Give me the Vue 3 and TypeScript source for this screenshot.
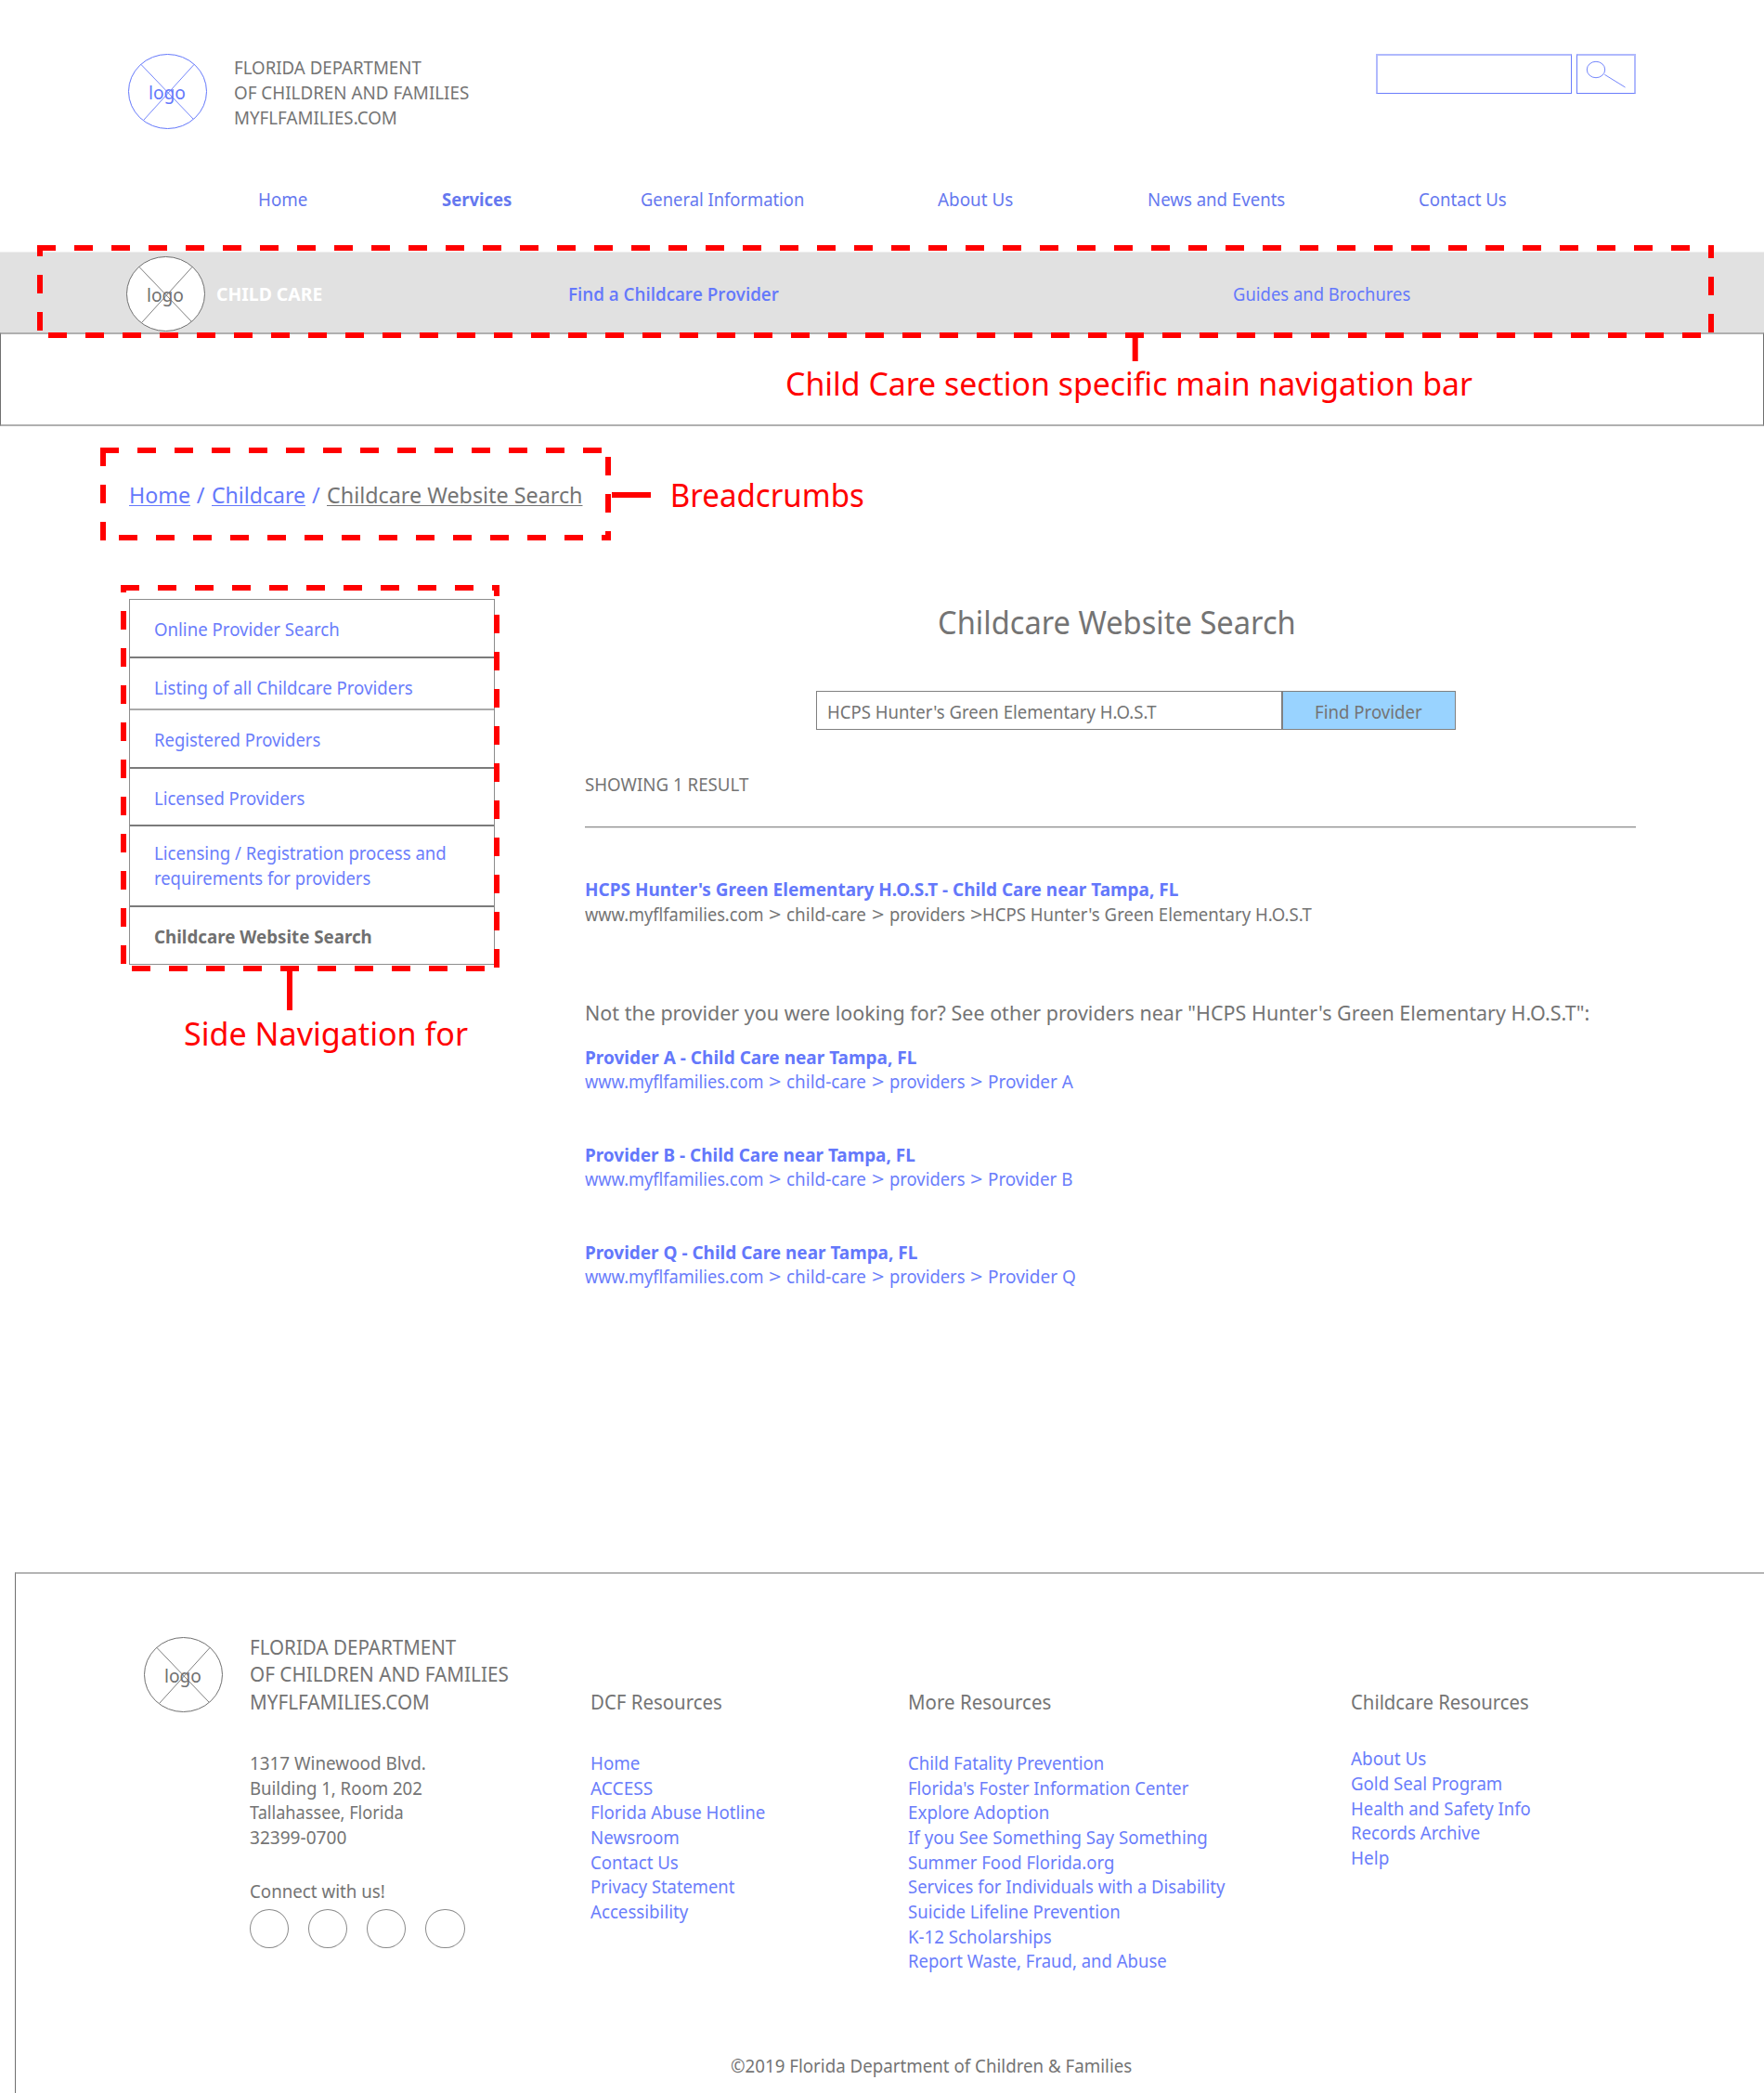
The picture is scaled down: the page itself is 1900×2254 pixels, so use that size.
<script setup lang="ts">
import { h, type Directive, type FunctionalComponent } from 'vue'

interface Line { text: string; width: number }
interface NavLine extends Line { bold?: boolean }
interface Segment extends Line { tight?: boolean }
interface Result { title: Line; page: Segment }
interface Dash { x1: number; y1: number; x2: number; y2: number; offset: number }

const BLUE = '#6478fb'
const GRAY = '#707070'

// Space kept free after the last letter of a fitted line.
const TRAILING = 1.2

// Condenses a line of text horizontally so that it takes exactly the given width.
const vFit: Directive<HTMLElement, number> = {
  mounted(el, { value }) {
    const natural = el.getBoundingClientRect().width
    el.style.transform = `scaleX(${(value - TRAILING) / natural})`
    el.style.marginRight = `${value - TRAILING - natural}px`
  },
}

const LogoMark: FunctionalComponent<{ color: string; fill?: string }> = (props) =>
  h('svg', { width: 86, height: 82, viewBox: '0 0 86 82', style: { display: 'block', flex: 'none' } }, [
    h('ellipse', { cx: 42.5, cy: 40.5, rx: 42, ry: 40, fill: props.fill ?? 'none', stroke: props.color, 'stroke-width': 1 }),
    h('path', { d: 'M14 11.5 70 70M71 11.5 17 71', stroke: props.color, 'stroke-width': 0.9, fill: 'none' }),
    h('text', {
      x: 22, y: 49, fill: props.color, textLength: 40, lengthAdjust: 'spacingAndGlyphs',
      'font-size': 19.6, 'font-family': '"Noto Sans", sans-serif',
    }, 'logo'),
  ])
LogoMark.props = ['color', 'fill']

const brand: Line[] = [
  { text: 'FLORIDA DEPARTMENT', width: 203 },
  { text: 'OF CHILDREN AND FAMILIES', width: 254.5 },
  { text: 'MYFLFAMILIES.COM', width: 177 },
]

const mainNav: NavLine[] = [
  { text: 'Home', width: 54.5 },
  { text: 'Services', width: 76.5, bold: true },
  { text: 'General Information', width: 177.5 },
  { text: 'About Us', width: 82.5 },
  { text: 'News and Events', width: 149.5 },
  { text: 'Contact Us', width: 96 },
]

const sideNav: { lines: Line[]; current?: boolean }[] = [
  { lines: [{ text: 'Online Provider Search', width: 201 }] },
  { lines: [{ text: 'Listing of all Childcare Providers', width: 280 }] },
  { lines: [{ text: 'Registered Providers', width: 180.5 }] },
  { lines: [{ text: 'Licensed Providers', width: 163.5 }] },
  {
    lines: [
      { text: 'Licensing / Registration process and', width: 316 },
      { text: 'requirements for providers', width: 234.5 },
    ],
  },
  { lines: [{ text: 'Childcare Website Search', width: 236 }], current: true },
]

const urlPath: Segment[] = [
  { text: 'www.myflfamilies.com', width: 193.7 },
  { text: '>', width: 14.7 },
  { text: 'child-care', width: 87.2 },
  { text: '>', width: 14.7 },
  { text: 'providers', width: 82.7 },
  { text: '>', width: 14.7 },
]

const topResult: Result = {
  title: { text: "HCPS Hunter's Green Elementary H.O.S.T - Child Care near Tampa, FL", width: 640.5 },
  page: { text: "HCPS Hunter's Green Elementary H.O.S.T", width: 356, tight: true },
}

const otherResults: Result[] = [
  {
    title: { text: 'Provider A - Child Care near Tampa, FL', width: 358.5 },
    page: { text: 'Provider A', width: 93.2 },
  },
  {
    title: { text: 'Provider B - Child Care near Tampa, FL', width: 357 },
    page: { text: 'Provider B', width: 92.7 },
  },
  {
    title: { text: 'Provider Q - Child Care near Tampa, FL', width: 359.5 },
    page: { text: 'Provider Q', width: 96.2 },
  },
]

const footerBrand: Line[] = [
  { text: 'FLORIDA DEPARTMENT', width: 223.5 },
  { text: 'OF CHILDREN AND FAMILIES', width: 280 },
  { text: 'MYFLFAMILIES.COM', width: 195 },
]

const address: Line[] = [
  { text: '1317 Winewood Blvd.', width: 191 },
  { text: 'Building 1, Room 202', width: 187 },
  { text: 'Tallahassee, Florida', width: 167 },
  { text: '32399-0700', width: 105.5 },
]

const resourceColumns: { name: string; heading: Line; links: Line[] }[] = [
  {
    name: 'dcf',
    heading: { text: 'DCF Resources', width: 143 },
    links: [
      { text: 'Home', width: 54.5 },
      { text: 'ACCESS', width: 68.5 },
      { text: 'Florida Abuse Hotline', width: 189.5 },
      { text: 'Newsroom', width: 97 },
      { text: 'Contact Us', width: 96 },
      { text: 'Privacy Statement', width: 156.5 },
      { text: 'Accessibility', width: 106.5 },
    ],
  },
  {
    name: 'more',
    heading: { text: 'More Resources', width: 155.5 },
    links: [
      { text: 'Child Fatality Prevention', width: 212.5 },
      { text: "Florida's Foster Information Center", width: 303.5 },
      { text: 'Explore Adoption', width: 153.5 },
      { text: 'If you See Something Say Something', width: 324 },
      { text: 'Summer Food Florida.org', width: 223.5 },
      { text: 'Services for Individuals with a Disability', width: 342.5 },
      { text: 'Suicide Lifeline Prevention', width: 230 },
      { text: 'K-12 Scholarships', width: 156 },
      { text: 'Report Waste, Fraud, and Abuse', width: 280 },
    ],
  },
  {
    name: 'childcare',
    heading: { text: 'Childcare Resources', width: 193 },
    links: [
      { text: 'About Us', width: 82.5 },
      { text: 'Gold Seal Program', width: 164.5 },
      { text: 'Health and Safety Info', width: 195 },
      { text: 'Records Archive', width: 140.5 },
      { text: 'Help', width: 42.5 },
    ],
  },
]

// Dashed sides of the three callout frames: 20px on, 20px off.
const dashes: Dash[] = [
  { x1: 40, y1: 267, x2: 1846, y2: 267, offset: 0 },
  { x1: 1843, y1: 264, x2: 1843, y2: 358, offset: 6 },
  { x1: 52, y1: 361, x2: 1832, y2: 361, offset: 0 },
  { x1: 43, y1: 264, x2: 43, y2: 356, offset: 8 },

  { x1: 108, y1: 485, x2: 648, y2: 485, offset: 0 },
  { x1: 655, y1: 492, x2: 655, y2: 582, offset: 0 },
  { x1: 128, y1: 579, x2: 658, y2: 579, offset: 0 },
  { x1: 111, y1: 482, x2: 111, y2: 582, offset: 0 },

  { x1: 130, y1: 633, x2: 538, y2: 633, offset: 0 },
  { x1: 535, y1: 630, x2: 535, y2: 1042, offset: 8 },
  { x1: 142, y1: 1043, x2: 522, y2: 1043, offset: 0 },
  { x1: 133, y1: 630, x2: 133, y2: 1038, offset: 12 },
]
</script>

<template>
  <div class="page">
    <header class="header">
      <div class="header-top">
        <LogoMark :color="BLUE" />
        <div class="brand">
          <div v-for="l in brand" :key="l.text" class="line"><span v-fit="l.width" class="t">{{ l.text }}</span></div>
        </div>
        <div class="site-search">
          <div class="site-search-input"></div>
          <div class="site-search-button">
            <svg width="62" height="40" viewBox="0 0 62 40" fill="none" stroke="#6478fb" stroke-width="0.9">
              <ellipse cx="20" cy="15" rx="9.7" ry="8.7" />
              <path d="M29.3 20.3 51.5 34" />
            </svg>
          </div>
        </div>
      </div>
      <nav class="main-nav">
        <a v-for="l in mainNav" :key="l.text" class="line" :class="{ bold: l.bold }"><span v-fit="l.width" class="t">{{ l.text }}</span></a>
      </nav>
    </header>

    <div class="section-bar">
      <LogoMark :color="GRAY" fill="#fff" />
      <div class="line section-name"><span v-fit="115.5" class="t">CHILD CARE</span></div>
      <a class="line find-link"><span v-fit="228" class="t">Find a Childcare Provider</span></a>
      <a class="line"><span v-fit="192.5" class="t">Guides and Brochures</span></a>
    </div>
    <div class="banner"></div>

    <div class="crumbs">
      <a><span v-fit="67.2" class="t u">Home</span></a>
      <span class="slash">/</span>
      <a><span v-fit="102.2" class="t u">Childcare</span></a>
      <span class="slash">/</span>
      <span class="here"><span v-fit="276.7" class="t u">Childcare Website Search</span></span>
    </div>

    <div class="body">
      <nav class="side-nav">
        <a v-for="(item, i) in sideNav" :key="i" class="side-item" :class="[`side-item-${i + 1}`, { current: item.current }]">
          <div v-for="l in item.lines" :key="l.text" class="line"><span v-fit="l.width" class="t">{{ l.text }}</span></div>
        </a>
      </nav>

      <main class="main">
        <h1 class="title"><span v-fit="387" class="t">Childcare Website Search</span></h1>
        <div class="search-row">
          <div class="search-input"><div class="line"><span v-fit="355.7" class="t">HCPS Hunter's Green Elementary H.O.S.T</span></div></div>
          <div class="search-button"><div class="line"><span v-fit="117" class="t">Find Provider</span></div></div>
        </div>
        <div class="line count"><span v-fit="177.5" class="t">SHOWING 1 RESULT</span></div>
        <div class="rule"></div>
        <div class="result">
          <div class="line link bold"><span v-fit="topResult.title.width" class="t">{{ topResult.title.text }}</span></div>
          <div class="line url">
            <span v-for="(s, i) in [...urlPath, topResult.page]" :key="i" class="seg" :class="{ tight: s.tight }"><span v-fit="s.width" class="t">{{ s.text }}</span></span>
          </div>
        </div>
        <p class="other"><span v-fit="1083.5" class="t">Not the provider you were looking for? See other providers near "HCPS Hunter's Green Elementary H.O.S.T":</span></p>
        <div class="others">
          <div v-for="r in otherResults" :key="r.title.text" class="result link">
            <div class="line bold"><span v-fit="r.title.width" class="t">{{ r.title.text }}</span></div>
            <div class="line url">
              <span v-for="(s, i) in [...urlPath, r.page]" :key="i" class="seg"><span v-fit="s.width" class="t">{{ s.text }}</span></span>
            </div>
          </div>
        </div>
      </main>
    </div>

    <footer class="footer">
      <div class="footer-columns">
        <div class="footer-logo"><LogoMark :color="GRAY" /></div>
        <div>
          <div v-for="l in footerBrand" :key="l.text" class="line-lg"><span v-fit="l.width" class="t">{{ l.text }}</span></div>
          <div class="address">
            <div v-for="l in address" :key="l.text" class="line"><span v-fit="l.width" class="t">{{ l.text }}</span></div>
          </div>
          <div class="line connect"><span v-fit="147" class="t">Connect with us!</span></div>
          <div class="social"><i v-for="n in 4" :key="n"></i></div>
        </div>
        <div v-for="c in resourceColumns" :key="c.name" class="resources" :class="c.name">
          <div class="line-lg"><span v-fit="c.heading.width" class="t">{{ c.heading.text }}</span></div>
          <div class="links">
            <div v-for="l in c.links" :key="l.text" class="line link"><span v-fit="l.width" class="t">{{ l.text }}</span></div>
          </div>
        </div>
      </div>
      <div class="line copyright"><span v-fit="433.5" class="t">©2019 Florida Department of Children &amp; Families</span></div>
    </footer>

    <svg class="callouts" width="1900" height="1160" viewBox="0 0 1900 1160">
      <line
        v-for="(d, i) in dashes" :key="i"
        :x1="d.x1" :y1="d.y1" :x2="d.x2" :y2="d.y2"
        stroke="#f00" stroke-width="6" stroke-dasharray="20 20" :stroke-dashoffset="d.offset"
      />
      <path d="M1222.7 361V389M659 533H701M312 1043V1088" stroke="#f00" stroke-width="6" />
      <g class="callout-text">
        <text x="846" y="426" textLength="740" lengthAdjust="spacingAndGlyphs">Child Care section specific main navigation bar</text>
        <text x="721.8" y="546" textLength="209" lengthAdjust="spacingAndGlyphs">Breadcrumbs</text>
        <text x="198" y="1125.5" textLength="306" lengthAdjust="spacingAndGlyphs">Side Navigation for</text>
      </g>
    </svg>
  </div>
</template>

<style>
body {
  margin: 0;
  background: #fff;
}
</style>

<style scoped>
.page {
  position: relative;
  width: 1900px;
  height: 2254px;
  overflow: hidden;
  display: flex;
  flex-direction: column;
  background: #fff;
  color: #747474;
  font-family: 'Noto Sans', 'Open Sans', sans-serif;
  font-size: 19.6px;
  line-height: 26.67px;
}
.page * {
  box-sizing: border-box;
}
.t {
  display: inline-block;
  white-space: nowrap;
  transform-origin: 0 50%;
}
.line {
  display: block;
  height: 26.67px;
  padding-top: 1.2px;
  white-space: nowrap;
}
.line-lg {
  font-size: 21.6px;
  line-height: 29.6px;
  height: 29.6px;
  padding-top: 0.3px;
  white-space: nowrap;
}
.bold {
  font-weight: 700;
}
.link {
  color: #6a7dfb;
}
.link .bold,
.link.bold {
  color: #6478fb;
}

.header {
  flex: none;
  height: 271px;
}
.header-top {
  display: flex;
  height: 142px;
  padding: 58px 138px 0;
}
.brand {
  margin: 1px 0 0 28px;
}
.site-search {
  display: flex;
  gap: 5px;
  margin-left: auto;
  height: 43px;
}
.site-search-input,
.site-search-button {
  border: 1px solid #6b7dfc;
  border-top: 2px solid #b0b9fd;
}
.site-search-input {
  width: 211px;
  border-left: 2px solid #b0b9fd;
}
.site-search-button {
  width: 64px;
  border-right: 2px solid #b0b9fd;
}
.site-search-button svg {
  display: block;
}
.main-nav {
  display: grid;
  grid-template-columns: 198px 214px 319.5px 226.5px 291.5px auto;
  padding: 58.5px 0 0 278px;
  color: #6578ef;
}

.section-bar {
  display: flex;
  flex: none;
  height: 87px;
  padding: 4px 0 0 136px;
  border-top: 1px solid #efefef;
  background: #e1e1e1;
  color: #6478fb;
}
.section-bar .line {
  margin-top: 27px;
}
.section-name {
  width: 380px;
  padding-left: 10.5px;
  color: #fff;
  font-weight: 700;
}
.find-link {
  width: 726.3px;
  padding-left: 10px;
  font-family: 'Open Sans', 'Noto Sans', sans-serif;
  font-weight: 600;
}
.banner {
  height: 101px;
  flex: none;
  border: 1px solid #707070;
  border-top: 2px solid #b0b0b0;
  border-bottom: 2px solid #b0b0b0;
}

.crumbs {
  display: flex;
  flex: none;
  height: 186px;
  padding: 58px 0 0 138.6px;
  font-size: 23.5px;
  line-height: 32px;
  color: #6478fb;
}
.slash {
  width: 23.2px;
  text-align: center;
}
.here {
  color: #747474;
}
.u {
  text-decoration: underline;
  text-decoration-thickness: 1px;
  text-underline-offset: 2px;
}

.body {
  display: flex;
  flex: none;
  align-items: flex-start;
  height: 1048px;
}
.side-nav {
  width: 394px;
  margin-left: 139px;
  border: 1px solid #8d8d8d;
}
.side-item {
  display: block;
  padding: 18px 0 0 26.3px;
  border-bottom: 2px solid #7b7b7b;
  color: #6a7dfb;
}
.side-item-1 {
  height: 63px;
}
.side-item-2 {
  height: 56px;
  border-bottom-color: #aaa;
}
.side-item-3 {
  height: 63px;
}
.side-item-4 {
  height: 62px;
}
.side-item-5 {
  height: 87px;
  padding-top: 15px;
}
.side-item-6 {
  height: 61px;
  border-bottom: 0;
}
.current {
  color: #707070;
  font-weight: 700;
}

.main {
  width: 1132px;
  margin-left: 97px;
  padding-top: 1px;
}
.title {
  margin: 0;
  padding-left: 379.5px;
  font-size: 34.5px;
  line-height: 47px;
  font-weight: 400;
}
.search-row {
  display: flex;
  margin: 51px 0 0 249px;
}
.search-input,
.search-button {
  height: 42px;
  padding-top: 8px;
  border: 1px solid #808080;
}
.search-input {
  width: 502px;
  padding-left: 11.2px;
}
.search-button {
  width: 187px;
  padding-left: 33.5px;
  background: #99d3ff;
}
.count {
  margin-top: 45px;
}
.rule {
  margin: 32px 0 52.6px;
  height: 2px;
  border-top: 1px solid #8d8d8d;
  background: #dedede;
}
.url {
  display: flex;
  gap: 5.5px;
}
.seg {
  flex: none;
}
.tight {
  margin-left: -5.5px;
}
.other {
  margin: 78px 0 19px;
  font-size: 21.7px;
  line-height: 30px;
  height: 30px;
}
.others {
  display: flex;
  flex-direction: column;
  gap: 51.6px;
}

.footer {
  flex: none;
  height: 561px;
  margin-left: 16px;
  border-left: 1px solid #707070;
  border-top: 2px solid #b4b4b4;
}
.footer-columns {
  display: grid;
  grid-template-columns: 113.5px 367px 342.5px 476.5px auto;
  height: 515.4px;
  padding: 63.4px 0 0 138px;
}
.footer-logo {
  padding-top: 4.6px;
}
.address {
  margin-top: 37.6px;
}
.connect {
  margin-top: 31.5px;
}
.social {
  display: flex;
  gap: 21px;
  margin-top: 6px;
}
.social i {
  width: 42.3px;
  height: 42.5px;
  border: 1px solid #8a8a8a;
  border-radius: 50%;
}
.resources {
  padding-top: 59.6px;
}
.links {
  margin-top: 37.2px;
}
.childcare .links {
  margin-top: 32.6px;
}
.copyright {
  padding-left: 770px;
}

.callouts {
  position: absolute;
  left: 0;
  top: 0;
  pointer-events: none;
}
.callout-text {
  font-size: 35.3px;
  fill: #f00;
}
</style>
